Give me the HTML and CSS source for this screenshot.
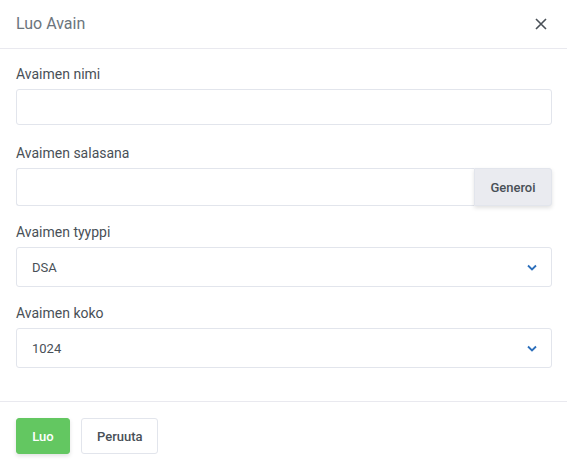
FILE: index.html
```html
<!DOCTYPE html>
<html>
<head>
<meta charset="utf-8">
<link rel="stylesheet" href="styles.css">
</head>
<body>
<div class="modal">
  <div class="modal-header">
    <h5 class="title">Luo Avain</h5>
    <button class="close" aria-label="close">
      <svg width="12" height="12" viewBox="0 0 12 12"><path d="M1 1L11 11M11 1L1 11" stroke="#495057" stroke-width="1.6" fill="none"/></svg>
    </button>
  </div>
  <div class="modal-body">
    <div class="field field-first">
      <label>Avaimen nimi</label>
      <div class="input"></div>
    </div>
    <div class="field">
      <label>Avaimen salasana</label>
      <div class="input-group">
        <div class="input grow"></div>
        <button class="btn-gen">Generoi</button>
      </div>
    </div>
    <div class="field">
      <label>Avaimen tyyppi</label>
      <div class="select"><span>DSA</span>
        <svg width="10" height="7" viewBox="0 0 10 7"><path d="M1 1.5L5 5.5L9 1.5" stroke="#2c6fbb" stroke-width="1.8" fill="none"/></svg>
      </div>
    </div>
    <div class="field">
      <label>Avaimen koko</label>
      <div class="select"><span>1024</span>
        <svg width="10" height="7" viewBox="0 0 10 7"><path d="M1 1.5L5 5.5L9 1.5" stroke="#2c6fbb" stroke-width="1.8" fill="none"/></svg>
      </div>
    </div>
  </div>
  <div class="modal-footer">
    <button class="btn btn-success">Luo</button>
    <button class="btn btn-light">Peruuta</button>
  </div>
</div>
</body>
</html>
```
FILE: styles.css
```css
* { box-sizing: border-box; }
html, body { margin: 0; padding: 0; background: #fff; }
body { font-family: Roboto, "Liberation Sans", sans-serif; color: #495057; }
.modal { width: 567px; height: 470px; display: flex; flex-direction: column; }
.modal-header {
  height: 49px; flex: none; display: flex; align-items: center; justify-content: space-between;
  padding: 0 20px 0 16px; border-bottom: 1px solid #e9e9ef;
}
.title { margin: 0; font-size: 16px; font-weight: 400; color: #6c757d; line-height: 1; padding-bottom: 1px; }
.close { border: 0; background: none; padding: 0; width: 12px; height: 12px; display: flex; }
.modal-body { padding: 17px 15px 0 16px; display: flex; flex-direction: column; gap: 18px; }
.field { display: flex; flex-direction: column; }
.field-first { margin-bottom: 2px; }
label { font-size: 14px; color: #495057; line-height: 17px; margin-bottom: 6px; }
.input { height: 36px; border: 1px solid #e2e5ec; border-radius: 3px; }
.input-group { display: flex; height: 38px; position: relative; }
.input.grow { flex: 1; height: 38px; border-right: 0; border-radius: 3px 0 0 3px; }
.btn-gen {
  width: 78px; height: 38px; border: 1px solid #e2e5ec; background: #eaebf0;
  border-radius: 0 3px 3px 0; font-family: inherit; font-size: 13px; font-weight: 500;
  color: #495057; box-shadow: 0 2px 4px rgba(0,0,0,0.12); padding: 0;
}
.select {
  height: 40px; border: 1px solid #e2e5ec; border-radius: 3px;
  display: flex; align-items: center; justify-content: space-between;
  padding: 0 14px 0 15px; font-size: 13px; color: #495057;
}
.modal-footer {
  margin-top: auto; border-top: 1px solid #e9e9ef; height: 69px; flex: none;
  display: flex; align-items: flex-start; gap: 11px; padding: 16px 16px 0;
}
.btn {
  height: 36px; border-radius: 3px; font-family: inherit; font-size: 13px; font-weight: 500;
  padding: 0 15px;
}
.btn-success { width: 54px; background: #63c761; border: 1px solid #63c761; color: #fff; box-shadow: 0 2px 4px rgba(0,0,0,0.12); }
.btn-light { width: 77px; background: #fff; border: 1px solid #e2e5ec; color: #495057; }
```
